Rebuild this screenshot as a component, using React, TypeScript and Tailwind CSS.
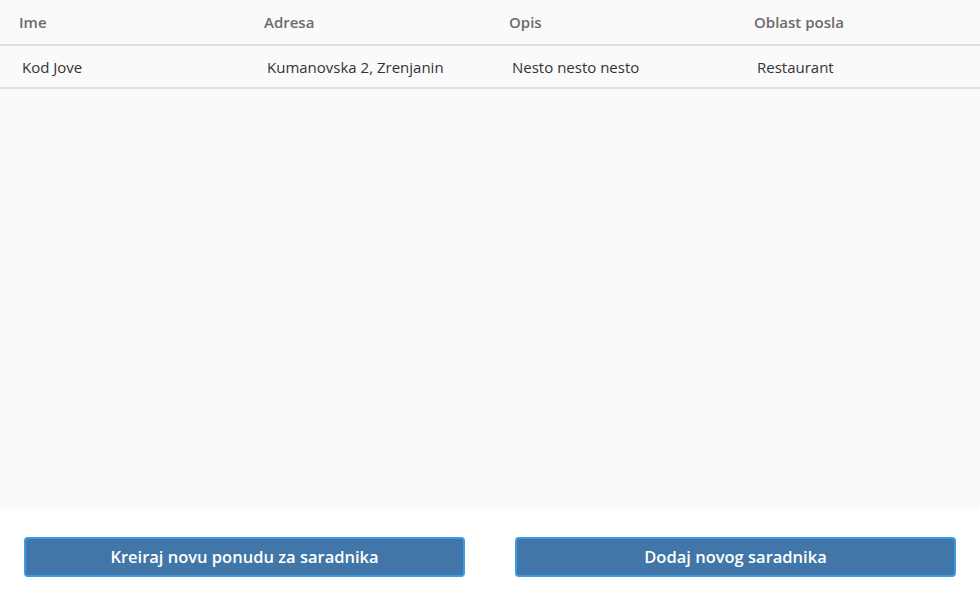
const columns = ["Ime", "Adresa", "Opis", "Oblast posla"];

const rows = [["Kod Jove", "Kumanovska 2, Zrenjanin", "Nesto nesto nesto", "Restaurant"]];

export default function App() {
  return (
    <div className="flex h-[600px] w-[980px] flex-col bg-white font-['Open_Sans',sans-serif]">
      <div className="h-[511px] rounded-b-md bg-[#fafafa]">
        <div className="grid h-[46px] grid-cols-4 items-center border-b-2 border-[#e0e0e0] text-[15px] font-semibold text-[#6b6b6b]">
          {columns.map((c) => (
            <div key={c} className="pl-[19px]">
              {c}
            </div>
          ))}
        </div>
        {rows.map((r) => (
          <div
            key={r[0]}
            className="grid h-[43px] grid-cols-4 items-center border-b-2 border-[#e0e0e0] pt-px text-[15px] text-[#333]"
          >
            {r.map((cell, i) => (
              <div key={i} className="pl-[22px]">
                {cell}
              </div>
            ))}
          </div>
        ))}
      </div>
      <div className="grid grid-cols-2 gap-[50px] px-6 pt-[26px]">
        <button className="h-[40px] rounded-sm border-2 border-[#3d9be3] bg-[#4176a8] text-[16.5px] font-semibold text-white">
          Kreiraj novu ponudu za saradnika
        </button>
        <button className="h-[40px] rounded-sm border-2 border-[#3d9be3] bg-[#4176a8] text-[16.5px] font-semibold text-white">
          Dodaj novog saradnika
        </button>
      </div>
    </div>
  );
}
